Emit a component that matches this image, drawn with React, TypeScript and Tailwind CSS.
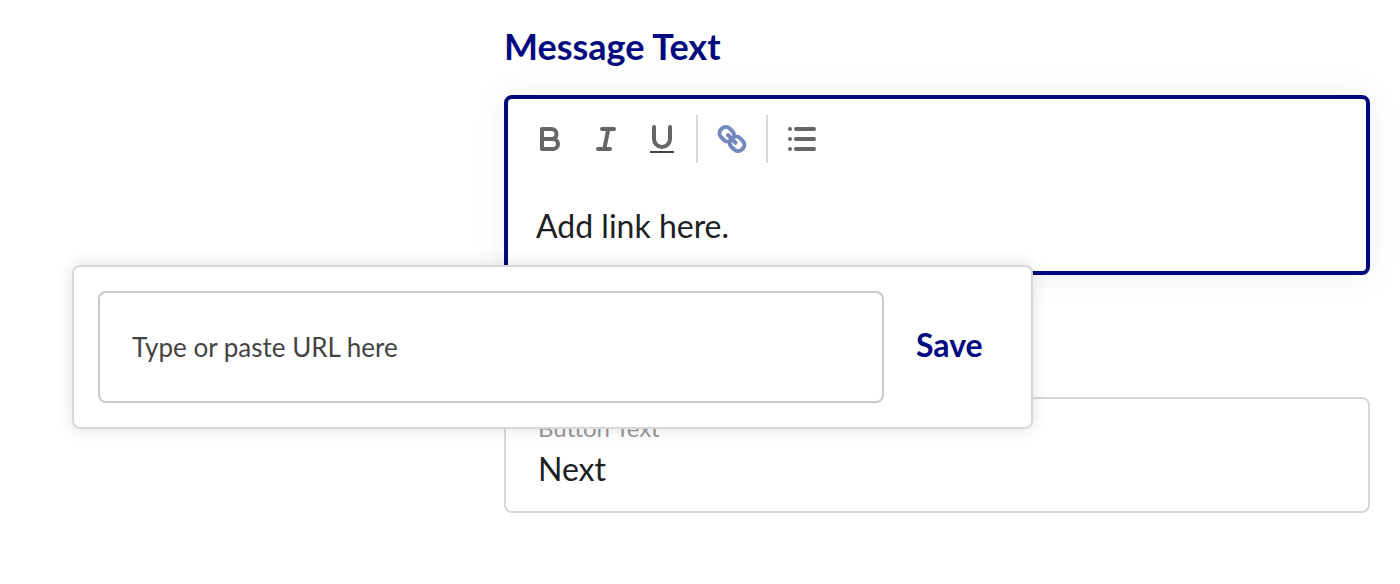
import { useState } from "react";
import type { ReactNode } from "react";

function ToolButton({ label, children }: { label: string; children: ReactNode }) {
  return (
    <button
      type="button"
      aria-label={label}
      className="flex h-12 w-14 shrink-0 items-center justify-center text-[#666666]"
    >
      {children}
    </button>
  );
}

function Divider() {
  return <span className="mx-1.5 h-12 w-0.5 shrink-0 bg-[#d8d8d8]" />;
}

function BoldIcon() {
  return (
    <svg viewBox="0 0 36 36" className="size-9" fill="none" stroke="currentColor" strokeWidth="4" strokeLinejoin="round">
      <path d="M10 8h9.5a4.8 4.8 0 0 1 0 10H10z" />
      <path d="M10 18h11a5 5 0 0 1 0 10H10z" />
    </svg>
  );
}

function ItalicIcon() {
  return (
    <svg viewBox="0 0 36 36" className="size-9" fill="none" stroke="currentColor" strokeWidth="4" strokeLinecap="round">
      <path d="M14 8h12M10 28h12M20.3 8l-4 20" />
    </svg>
  );
}

function UnderlineIcon() {
  return (
    <svg viewBox="0 0 36 36" className="size-9" fill="none" stroke="currentColor" strokeWidth="4" strokeLinecap="round">
      <path d="M10 6v12a8 8 0 0 0 16 0V6" />
      <path d="M6 31h24" stroke="#444444" strokeWidth="2" strokeLinecap="butt" />
    </svg>
  );
}

function LinkIcon() {
  return (
    <svg viewBox="0 0 36 36" className="size-9" fill="none" stroke="#7488bd" strokeWidth="4" strokeLinecap="round">
      <rect x="5.3" y="7.1" width="15" height="12.2" rx="5.6" transform="rotate(45 12.8 13.2)" />
      <rect x="15.5" y="16.7" width="15" height="12.2" rx="5.6" transform="rotate(45 23 22.8)" />
      <path d="M14 14l7.6 7.8" />
    </svg>
  );
}

function ListIcon() {
  return (
    <svg viewBox="0 0 36 36" className="size-9" fill="none" stroke="currentColor" strokeWidth="4" strokeLinecap="round">
      <path d="M12 8h18M12 18h18M12 28h18" />
      <path d="M6 8h.01M6 18h.01M6 28h.01" />
    </svg>
  );
}

function LinkPopup() {
  const [url, setUrl] = useState("");
  return (
    <form
      onSubmit={(event) => event.preventDefault()}
      className="absolute top-[170px] -left-[432px] z-10 flex w-[961px] items-center rounded-lg border-2 border-[#d8d8d8] bg-white p-6 shadow-[0_0_16px_rgba(0,0,0,0.12)]"
    >
      <input
        type="text"
        aria-label="Link URL"
        placeholder="Type or paste URL here"
        value={url}
        onChange={(event) => setUrl(event.target.value)}
        className="h-28 w-[786px] rounded-lg border-2 border-[#cacaca] bg-white px-8 text-[26px] text-[#444444] outline-none placeholder:text-[#444444]"
      />
      <button type="submit" className="ml-8 pb-1 text-[32px] leading-10 font-bold text-[#000a7e]">
        Save
      </button>
    </form>
  );
}

export default function App() {
  return (
    <main className="min-h-screen bg-white pt-6 pr-[30px] pb-16 pl-[36%] font-['Lato','Liberation_Sans',sans-serif] text-[#1c2024]">
      <label htmlFor="message" className="block text-4xl leading-[45px] font-bold text-[#000a7e]">
        Message Text
      </label>

      <div className="relative mt-[26px]">
        <div className="rounded-lg border-4 border-[#000a7e] bg-white shadow-[0_0_32px_rgba(0,40,130,0.08)]">
          <div role="toolbar" aria-label="Formatting" className="flex items-center px-3.5 pt-4">
            <ToolButton label="Bold"><BoldIcon /></ToolButton>
            <ToolButton label="Italic"><ItalicIcon /></ToolButton>
            <ToolButton label="Underline"><UnderlineIcon /></ToolButton>
            <Divider />
            <ToolButton label="Insert link"><LinkIcon /></ToolButton>
            <Divider />
            <ToolButton label="Bulleted list"><ListIcon /></ToolButton>
          </div>
          <textarea
            id="message"
            rows={1}
            defaultValue="Add link here."
            className="mt-[39px] mb-[21px] block w-full resize-none overflow-hidden bg-transparent px-7 text-[32px] leading-12 outline-none"
          />
        </div>
        <LinkPopup />
      </div>

      <div className="mt-[122px] rounded-lg border-2 border-[#d8d8d8] bg-white px-8 pt-3 pb-[18px]">
        <label htmlFor="button-text" className="block text-2xl leading-[34px] text-[#999999]">
          Button Text
        </label>
        <input
          id="button-text"
          type="text"
          defaultValue="Next"
          className="block h-12 w-full bg-transparent text-[32px] outline-none"
        />
      </div>
    </main>
  );
}
